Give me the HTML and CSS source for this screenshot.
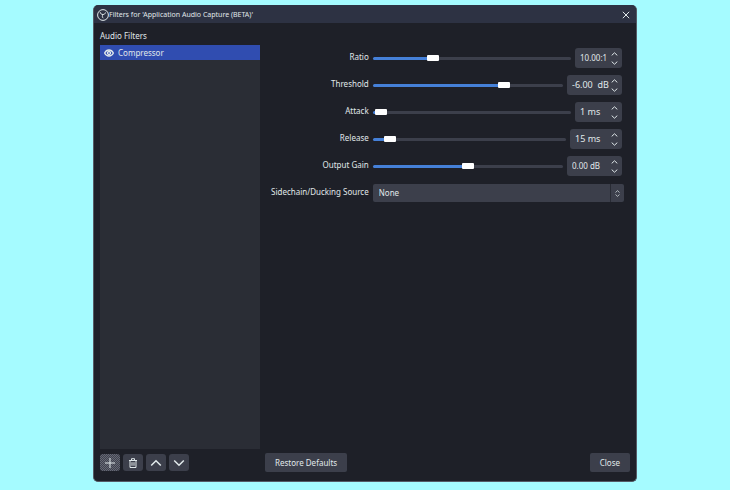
FILE: index.html
```html
<!DOCTYPE html>
<html lang="en">
<head>
<meta charset="utf-8">
<title>Filters for 'Application Audio Capture (BETA)'</title>
<link rel="stylesheet" href="styles.css">
</head>
<body>
<svg class="defs" aria-hidden="true">
  <symbol id="up" viewBox="0 0 7 4"><path d="M.7 3.4 3.5.8l2.8 2.6"/></symbol>
  <symbol id="down" viewBox="0 0 7 4"><path d="M.7.6l2.8 2.6L6.3.6"/></symbol>
</svg>
<main class="dialog">
  <header class="titlebar">
    <svg class="logo" viewBox="0 0 12 12" aria-hidden="true"><circle cx="6" cy="6" r="5.400"/><path d="M3.200 3.200c.2 1.500 1.300 2.300 2.800 2.300 1.300 0 2.200-.7 2.500-2M6 5.500c-.9 1.200-.9 2.500.2 3.700"/></svg>
    <h1>Filters for 'Application Audio Capture (BETA)'</h1>
    <button class="dismiss" aria-label="Close window"><svg viewBox="0 0 8 8"><path d="M.8.8l6.400 6.400M7.200.8.8 7.200"/></svg></button>
  </header>
  <div class="content">
    <section class="filters">
      <h2>Audio Filters</h2>
      <ul class="list">
        <li class="item">
          <svg class="eye" viewBox="0 0 10 8" aria-hidden="true"><path d="M.6 4C1.600 2 3.200 1 5 1s3.400 1 4.400 3C8.400 6 6.800 7 5 7S1.600 6 .6 4z"/><circle cx="5" cy="4" r="1.500"/></svg>
          Compressor
        </li>
      </ul>
    </section>
    <form class="settings">
      <label for="ratio">Ratio</label>
      <div class="control">
        <input type="range" id="ratio" min="0" max="1000" value="290" style="--fill:29%">
        <div class="spin narrow small"><input type="text" aria-label="Ratio value" value="10.00:1"><span class="steps"><button type="button" aria-label="Increase"><svg><use href="#up"/></svg></button><button type="button" aria-label="Decrease"><svg><use href="#down"/></svg></button></span></div>
      </div>
      <label for="threshold">Threshold</label>
      <div class="control">
        <input type="range" id="threshold" min="0" max="1000" value="700" style="--fill:70%">
        <div class="spin wide"><input type="text" aria-label="Threshold value" value="-6.00  dB"><span class="steps"><button type="button" aria-label="Increase"><svg><use href="#up"/></svg></button><button type="button" aria-label="Decrease"><svg><use href="#down"/></svg></button></span></div>
      </div>
      <label for="attack">Attack</label>
      <div class="control">
        <input type="range" id="attack" min="0" max="1000" value="13" style="--fill:1.3%">
        <div class="spin narrow"><input type="text" aria-label="Attack value" value="1 ms"><span class="steps"><button type="button" aria-label="Increase"><svg><use href="#up"/></svg></button><button type="button" aria-label="Decrease"><svg><use href="#down"/></svg></button></span></div>
      </div>
      <label for="release">Release</label>
      <div class="control">
        <input type="range" id="release" min="0" max="1000" value="62" style="--fill:6.2%">
        <div class="spin medium"><input type="text" aria-label="Release value" value="15 ms"><span class="steps"><button type="button" aria-label="Increase"><svg><use href="#up"/></svg></button><button type="button" aria-label="Decrease"><svg><use href="#down"/></svg></button></span></div>
      </div>
      <label for="gain">Output Gain</label>
      <div class="control">
        <input type="range" id="gain" min="0" max="1000" value="500" style="--fill:50%">
        <div class="spin wide small"><input type="text" aria-label="Output Gain value" value="0.00 dB"><span class="steps"><button type="button" aria-label="Increase"><svg><use href="#up"/></svg></button><button type="button" aria-label="Decrease"><svg><use href="#down"/></svg></button></span></div>
      </div>
      <label for="source">Sidechain/Ducking Source</label>
      <div class="combo">
        <select id="source"><option>None</option></select>
        <span class="arrows"><svg><use href="#up"/></svg><svg><use href="#down"/></svg></span>
      </div>
    </form>
  </div>
  <footer class="footer">
    <div class="tools">
      <button class="tool add" aria-label="Add filter"><svg viewBox="0 0 12 12"><path d="M6 1v10M1 6h10"/></svg></button>
      <button class="tool" aria-label="Remove filter"><svg viewBox="0 0 12 12"><path d="M2 3.500h8M4.500 3.300V1.700h3v1.600M3 3.500v7h6v-7M5 5.200v3.600M7 5.200v3.600"/></svg></button>
      <button class="tool arrow" aria-label="Move up"><svg viewBox="0 0 12 12"><path d="M1.200 8.500 6 3.700l4.800 4.800"/></svg></button>
      <button class="tool arrow" aria-label="Move down"><svg viewBox="0 0 12 12"><path d="M1.200 3.500 6 8.300l4.800-4.800"/></svg></button>
    </div>
    <button class="action">Restore Defaults</button>
    <button class="action last">Close</button>
  </footer>
</main>
</body>
</html>
```
FILE: styles.css
```css
:root {
  --control: #3c3f4b;
  --text: #e0e8ea;
  --blue: #4580d8;
}
* { box-sizing: border-box; }
body {
  margin: 0;
  min-height: 100vh;
  padding: 5px 93px 8px;
  display: flex;
  background: #a5fbff;
  color: var(--text);
  font: 8px/12px "Noto Sans", "Open Sans", sans-serif;
}
h1, h2, ul { margin: 0; padding: 0; font: inherit; }
button, input, select { font: inherit; color: inherit; border: 0; margin: 0; padding: 0; }
svg { display: block; fill: none; stroke: currentColor; }
.defs { position: absolute; width: 0; height: 0; }
.dialog {
  flex: 1;
  display: flex;
  flex-direction: column;
  background: #1e2028;
  border: 1px solid #555b66;
  border-top-color: #2d3243;
  border-radius: 5px;
  overflow: hidden;
}
.titlebar {
  display: flex;
  align-items: center;
  height: 17px;
  padding: 0 5px 0 3px;
  background: #2d3243;
}
.titlebar h1 { flex: 1; font-size: 7px; }
.logo { width: 12px; height: 12px; }
.dismiss { padding: 1px; background: none; }
.dismiss svg { width: 8px; height: 8px; }
.content { flex: 1; display: flex; padding-left: 6px; }
.filters { width: 160px; display: flex; flex-direction: column; padding-top: 7px; }
.list { flex: 1; margin-top: 3px; background: #2a2d35; list-style: none; }
.item {
  display: flex;
  align-items: center;
  gap: 4px;
  height: 15px;
  padding-left: 4px;
  background: #304db0;
}
.eye { width: 10px; height: 8px; stroke-width: 1.3; }
.settings {
  flex: 1;
  display: grid;
  grid-template-columns: auto 1fr;
  gap: 7px 4px;
  align-content: start;
  padding: 25px 12px 0 11px;
}
.settings label { text-align: right; padding-top: 3px; }
.control { display: flex; align-items: center; gap: 4px; padding-right: 2px; }
input[type="range"] {
  flex: 1;
  min-width: 0;
  height: 20px;
  appearance: none;
  background: none;
}
input[type="range"]::-webkit-slider-runnable-track {
  height: 3px;
  border-radius: 2px;
  background: linear-gradient(to right, var(--blue) var(--fill), var(--control) var(--fill));
}
input[type="range"]::-webkit-slider-thumb {
  appearance: none;
  width: 12px;
  height: 6px;
  margin-top: -2px;
  border-radius: 1px;
  background: #fff;
}
.spin {
  display: flex;
  height: 20px;
  padding: 0 4px 0 5px;
  border-radius: 3px;
  background: var(--control);
  font-size: 9px;
}
.spin input { flex: 1; min-width: 0; background: none; }
.narrow { width: 47px; }
.medium { width: 52px; }
.wide { width: 55px; }
.small { font-size: 8px; }
.steps { display: flex; flex-direction: column; justify-content: center; gap: 5px; }
.steps button { background: none; }
.steps svg, .arrows svg { width: 7px; height: 4px; }
.combo { display: grid; align-items: center; height: 20px; }
.combo select, .arrows { grid-area: 1 / 1; }
.combo select {
  width: 100%;
  height: 18px;
  padding-left: 6px;
  appearance: none;
  border-radius: 2px;
  background: var(--control);
}
.arrows {
  justify-self: end;
  display: flex;
  flex-direction: column;
  align-items: center;
  justify-content: center;
  gap: 1px;
  width: 14px;
  height: 18px;
  border-left: 1px solid #282b34;
  pointer-events: none;
}
.arrows svg { width: 5px; height: 3px; }
.footer { display: flex; align-items: center; padding: 4px 6px 9px; }
.tools { display: flex; gap: 3px; width: 165px; }
.tool {
  display: grid;
  place-items: center;
  width: 20px;
  height: 17px;
  border-radius: 3px;
  background: var(--control);
}
.tool svg { width: 12px; height: 12px; }
.arrow svg { stroke-width: 1.5; }
.add { background: repeating-conic-gradient(#3f424e 0 25%, #666975 0 50%) 0 0 / 2px 2px var(--control); }
.action { height: 19px; padding: 0 10px; border-radius: 2px; background: var(--control); }
.last { margin-left: auto; }
```
